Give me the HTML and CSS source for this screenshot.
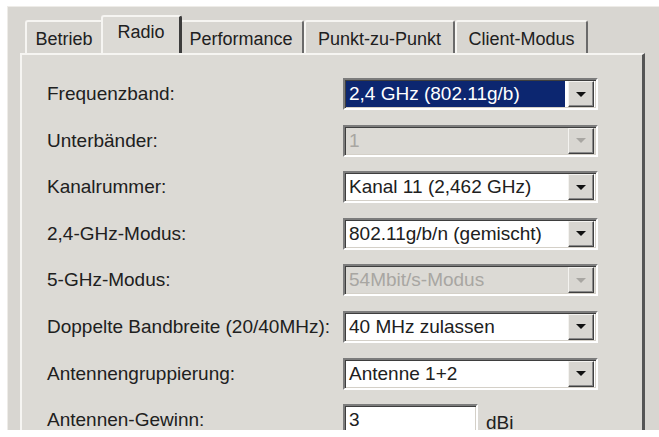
FILE: index.html
```html
<!DOCTYPE html>
<html lang="de">
<head>
  <meta charset="UTF-8" />
  <title>WLAN-Einstellungen</title>
  <link rel="stylesheet" href="styles.css">
</head>
<body>

  <div class="dialog">

    <!-- Tabs -->
    <div class="tabs">
      <div class="tab tab-betrieb">Betrieb</div>
      <div class="tab tab-radio active">Radio</div>
      <div class="tab tab-perf">Performance</div>
      <div class="tab tab-p2p">Punkt-zu-Punkt</div>
      <div class="tab tab-client">Client-Modus</div>
    </div>

    <!-- Radio page -->
    <div class="page">
      <div class="form-grid">
        <span class="label">Frequenzband:</span>
        <div class="combo">
          <span class="value selected">2,4 GHz (802.11g/b)</span>
          <span class="drop"><span class="arrow"></span></span>
        </div>

        <span class="label">Unterbänder:</span>
        <div class="combo disabled">
          <span class="value">1</span>
          <span class="drop"><span class="arrow"></span></span>
        </div>

        <span class="label">Kanalrummer:</span>
        <div class="combo">
          <span class="value">Kanal 11 (2,462 GHz)</span>
          <span class="drop"><span class="arrow"></span></span>
        </div>

        <span class="label">2,4-GHz-Modus:</span>
        <div class="combo">
          <span class="value">802.11g/b/n (gemischt)</span>
          <span class="drop"><span class="arrow"></span></span>
        </div>

        <span class="label">5-GHz-Modus:</span>
        <div class="combo disabled">
          <span class="value">54Mbit/s-Modus</span>
          <span class="drop"><span class="arrow"></span></span>
        </div>

        <span class="label">Doppelte Bandbreite (20/40MHz):</span>
        <div class="combo">
          <span class="value">40 MHz zulassen</span>
          <span class="drop"><span class="arrow"></span></span>
        </div>

        <span class="label">Antennengruppierung:</span>
        <div class="combo">
          <span class="value">Antenne 1+2</span>
          <span class="drop"><span class="arrow"></span></span>
        </div>

        <span class="label">Antennen-Gewinn:</span>
        <div class="gain">
          <div class="textbox">3</div>
          <span class="unit">dBi</span>
        </div>
      </div>
    </div>

  </div>

</body>
</html>
```

FILE: styles.css
```css
body {
  margin: 0;
  padding: 0;
  background: #ffffff;
  font-family: 'Liberation Sans', Arial, sans-serif;
  font-size: 19px;
  color: #202020;
  overflow: hidden;
}

.dialog {
  margin: 6px 0 0 7px;
  height: 424px;
  background: #d8d6d1;
  border-top: 1px solid #eeece8;
  border-left: 1px solid #eeece8;
  box-sizing: border-box;
}

/* Tabs */
.tabs {
  display: flex;
  align-items: flex-end;
  height: 46px;
  padding-left: 17px;
  font-size: 18px;
}

.tab {
  height: 33px;
  box-sizing: border-box;
  padding: 7px 0 0 0;
  text-align: center;
  background: #d8d6d1;
  border-top: 2px solid #f6f5f2;
  border-left: 2px solid #f6f5f2;
  border-right: 2px solid #6a6a6a;
  border-radius: 3px 3px 0 0;
  white-space: nowrap;
}

.tab-betrieb { width: 78px; }
.tab-perf { width: 124px; border-left: none; }
.tab-p2p { width: 151px; }
.tab-client { width: 133px; }

.tab.active {
  width: 81px;
  height: 38px;
  padding-top: 5px;
  margin: 0 -2px 0 -2px;
  position: relative;
  z-index: 1;
  border-right-width: 3px;
  border-right-color: #3c3c3c;
  background: #dcdad5;
}

/* Page */
.page {
  margin-left: 12px;
  width: 625px;
  height: 378px;
  box-sizing: border-box;
  background: #dcdad5;
  border-top: 2px solid #f6f5f2;
  border-left: 2px solid #f6f5f2;
  border-right: 3px solid #555555;
  padding: 23px 0 0 25px;
}

.form-grid {
  display: grid;
  grid-template-columns: 296px 255px;
  grid-auto-rows: 32px;
  row-gap: 14.6px;
  align-items: center;
}

.label {
  white-space: nowrap;
}

/* Combo boxes */
.combo {
  height: 32px;
  box-sizing: border-box;
  display: flex;
  align-items: stretch;
  background: #ffffff;
  border: 2px solid;
  border-color: #7c7c7c #ffffff #ffffff #7c7c7c;
  box-shadow: inset 1px 1px #3e3e3e, inset -1px -1px #d4d0c8;
  padding: 1px 2px 1px 1px;
}

.value {
  flex: 1;
  display: flex;
  align-items: center;
  padding-left: 3px;
  margin-right: 3px;
  white-space: nowrap;
  overflow: hidden;
}

.value.selected {
  background: #0c2670;
  color: #ffffff;
}

.drop {
  width: 26px;
  box-sizing: border-box;
  background: #d8d6d1;
  border: 1px solid;
  border-color: #f4f3f0 #404040 #404040 #f4f3f0;
  box-shadow: inset -1px -1px #8a8a8a;
  display: flex;
  align-items: center;
  justify-content: center;
}

.arrow {
  width: 0;
  height: 0;
  border-left: 5px solid transparent;
  border-right: 5px solid transparent;
  border-top: 5px solid #111111;
}

.combo.disabled {
  background: #dcdad5;
}

.combo.disabled .value {
  color: #a8a6a2;
}

.combo.disabled .arrow {
  border-top-color: #a8a6a2;
}

/* Text field */
.gain {
  display: flex;
  align-items: center;
  gap: 8px;
}

.textbox {
  width: 135px;
  height: 32px;
  box-sizing: border-box;
  background: #ffffff;
  border: 2px solid;
  border-color: #7c7c7c #ffffff #ffffff #7c7c7c;
  box-shadow: inset 1px 1px #3e3e3e, inset -1px -1px #d4d0c8;
  padding: 3px 0 0 4px;
}

.unit {
  padding-top: 6px;
}
```
